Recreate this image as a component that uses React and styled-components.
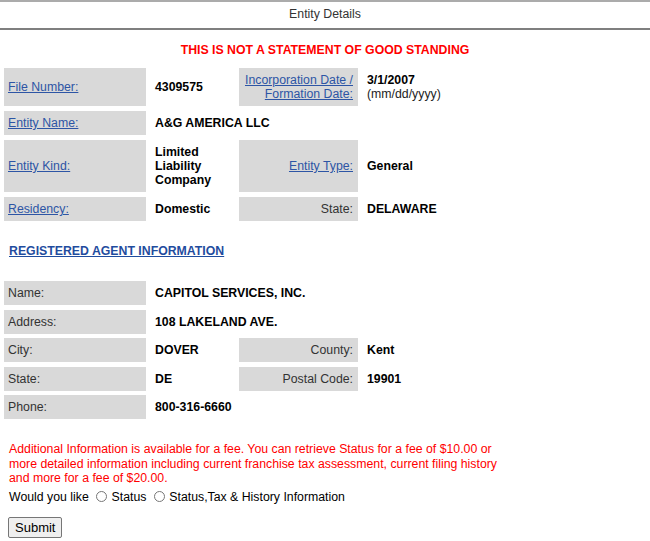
import React from "react";
import styled, { createGlobalStyle } from "styled-components";

const Global = createGlobalStyle`
  html, body { margin: 0; padding: 0; background: #fff; }
  body { font-family: "Liberation Sans", Arial, sans-serif; font-size: 12.3px; color: #000; }
`;

const Header = styled.div`
  border-top: 2px solid #ababab;
  border-bottom: 2px solid #7f7f7f;
  padding: 5px 0 7px;
  line-height: 14px;
  text-align: center;
  color: #333;
`;

const Warning = styled.div`
  margin-top: 13px;
  line-height: 14px;
  text-align: center;
  color: #ff0000;
  font-weight: bold;
`;

const Grid = styled.div`
  display: grid;
  grid-template-columns: 142px 83px 119px 180px;
  column-gap: 5px;
  row-gap: ${(p) => p.$rowGap}px;
  margin: ${(p) => p.$top}px 0 0 4px;
  line-height: 14px;
`;

const Label = styled.div`
  background: #d9d9d9;
  padding: 5px ${(p) => (p.$right ? "5px" : "4px")} 5px 4px;
  display: flex;
  align-items: center;
  justify-content: ${(p) => (p.$right ? "flex-end" : "flex-start")};
  text-align: ${(p) => (p.$right ? "right" : "left")};
  color: #333;
  white-space: nowrap;
`;

const Value = styled.div`
  padding: 5px 4px;
  display: flex;
  align-items: center;
  font-weight: bold;
  color: #000;
  grid-column: span ${(p) => p.$span || 1};
`;

const Plain = styled.span`
  font-weight: normal;
  color: #222;
`;

const FieldLink = styled.a`
  color: #2d55a5;
  text-decoration: underline;
  cursor: pointer;
`;

const Section = styled.div`
  padding: 0 8px;
`;

const SectionTitle = styled.a`
  display: block;
  margin-top: 23px;
  padding-left: 1px;
  line-height: 14px;
  font-weight: bold;
  color: #1f4c9e;
  text-decoration: underline;
`;

const Notice = styled.p`
  margin: 23px 0 0;
  padding-left: 1px;
  width: 500px;
  line-height: 14.5px;
  color: #ff0000;
`;

const Choice = styled.div`
  line-height: 14.5px;
  color: #000;
  margin-top: 4px;
  padding-left: 1px;
`;

const Radio = styled.input`
  width: 11px;
  height: 11px;
  margin: 0 1px 0 4px;
  vertical-align: -1px;
`;

const Submit = styled.button`
  margin-top: 13px;
  height: 21px;
  padding: 0 6px;
  font-family: "Liberation Sans", Arial, sans-serif;
  font-size: 13px;
  color: #000;
  background: #efefef;
  border: 1px solid #767676;
  border-radius: 2px;
`;

const Link = ({ children }) => <FieldLink href="#">{children}</FieldLink>;

export default function App() {
  return (
    <>
      <Global />
      <Header>Entity Details</Header>
      <Warning>THIS IS NOT A STATEMENT OF GOOD STANDING</Warning>

      <Grid $rowGap={5} $top={11}>
        <Label><Link>File Number:</Link></Label>
        <Value>4309575</Value>
        <Label $right><Link>Incorporation Date /<br />Formation Date:</Link></Label>
        <Value>
          <div>
            3/1/2007
            <br />
            <Plain>(mm/dd/yyyy)</Plain>
          </div>
        </Value>

        <Label><Link>Entity Name:</Link></Label>
        <Value $span={3}>A&amp;G AMERICA LLC</Value>

        <Label><Link>Entity Kind:</Link></Label>
        <Value>
          <div>Limited<br />Liability<br />Company</div>
        </Value>
        <Label $right><Link>Entity Type:</Link></Label>
        <Value>General</Value>

        <Label><Link>Residency:</Link></Label>
        <Value>Domestic</Value>
        <Label $right>State:</Label>
        <Value>DELAWARE</Value>
      </Grid>

      <Section>
        <SectionTitle href="#">REGISTERED AGENT INFORMATION</SectionTitle>
      </Section>

      <Grid $rowGap={4.5} $top={23}>
        <Label>Name:</Label>
        <Value $span={3}>CAPITOL SERVICES, INC.</Value>

        <Label>Address:</Label>
        <Value $span={3}>108 LAKELAND AVE.</Value>

        <Label>City:</Label>
        <Value>DOVER</Value>
        <Label $right>County:</Label>
        <Value>Kent</Value>

        <Label>State:</Label>
        <Value>DE</Value>
        <Label $right>Postal Code:</Label>
        <Value>19901</Value>

        <Label>Phone:</Label>
        <Value $span={3}>800-316-6660</Value>
      </Grid>

      <Section>
        <Notice>
          Additional Information is available for a fee. You can retrieve Status for a fee of $10.00 or
          more detailed information including current franchise tax assessment, current filing history
          and more for a fee of $20.00.
        </Notice>
        <Choice>
          Would you like <Radio type="radio" name="opt" /> Status <Radio type="radio" name="opt" /> Status,Tax &amp; History Information
        </Choice>
        <Submit type="button">Submit</Submit>
      </Section>
    </>
  );
}
